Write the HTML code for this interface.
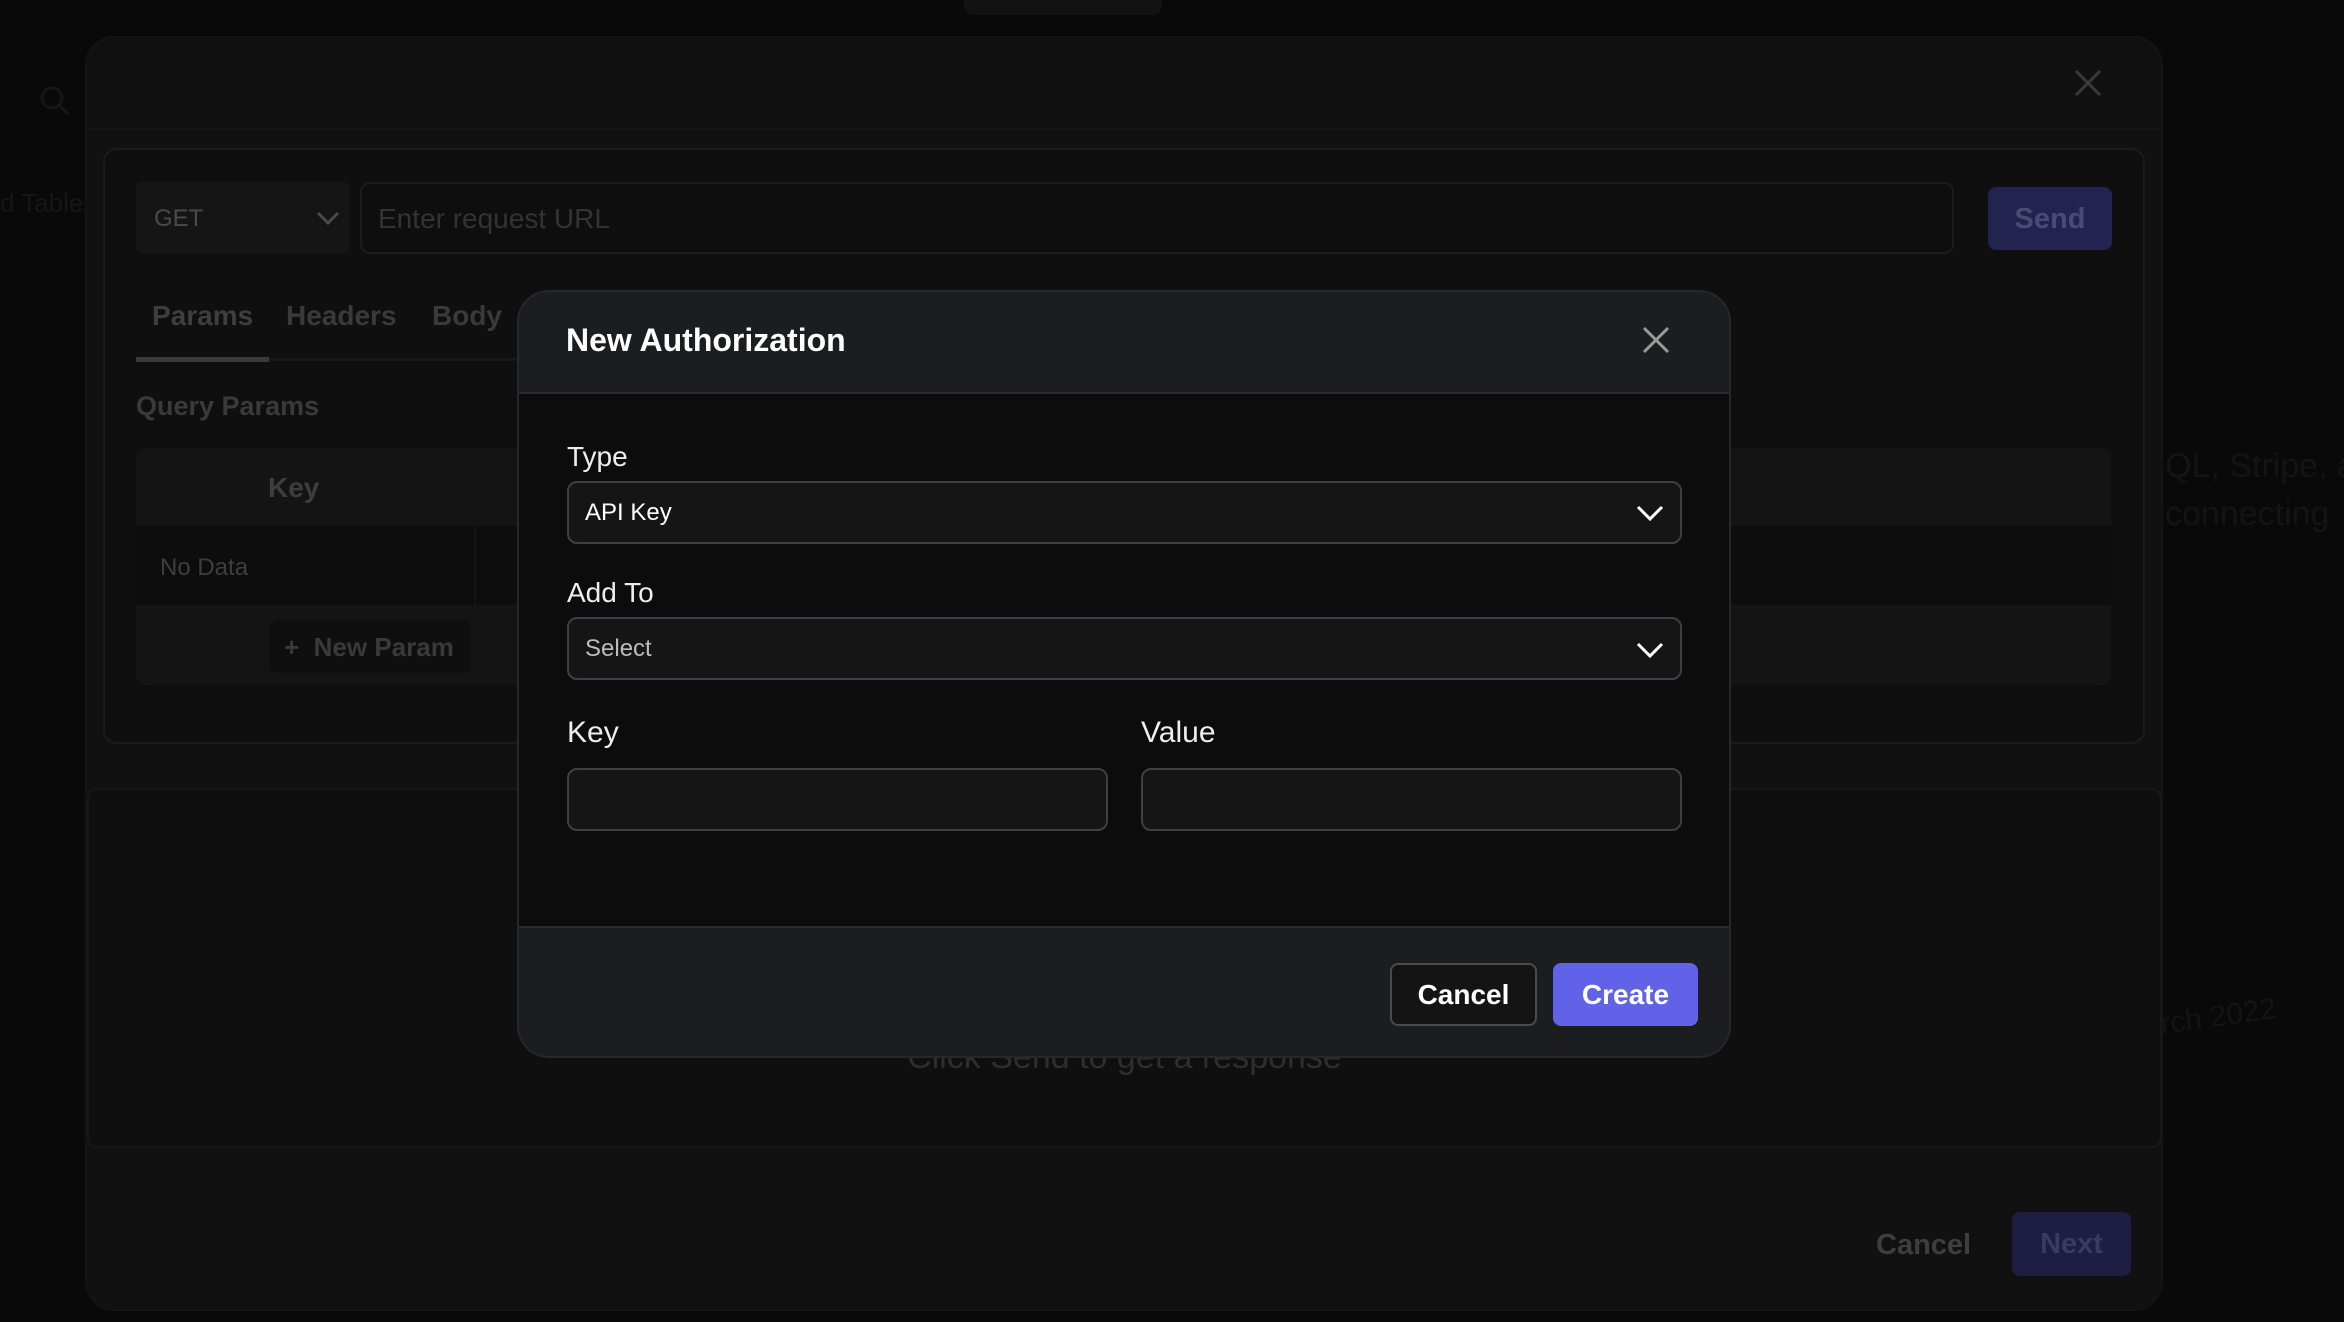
<!DOCTYPE html>
<html><head><meta charset="utf-8"><style>
*{box-sizing:border-box;margin:0;padding:0}
body{width:2344px;height:1322px;background:#090909;font-family:"Liberation Sans",sans-serif;position:relative;overflow:hidden;color:#fff}
.a{position:absolute}
</style></head><body>
<div class="a" style="left:964px;top:0;width:198px;height:15px;background:#121212;border-radius:0 0 10px 10px"></div>
<svg class="a" style="left:38px;top:84px" width="34" height="34" viewBox="0 0 34 34"><circle cx="14" cy="14" r="10" stroke="#161616" stroke-width="3" fill="none"/><path d="M21 21l9 9" stroke="#161616" stroke-width="3"/></svg>
<div class="a" style="left:0;top:188px;font-size:26px;color:#161616;white-space:nowrap">d Tables</div>
<div class="a" style="left:2165px;top:442px;font-size:34px;color:#141414;line-height:48px;white-space:nowrap">QL, Stripe, a<br>connecting</div>
<div class="a" style="left:2160px;top:1000px;font-size:30px;color:#141414;transform:rotate(-8deg);white-space:nowrap">rch 2022</div>

<div class="a" style="left:85px;top:36px;width:2078px;height:1275px;background:#111111;border-radius:30px;border:1px solid #161616"></div>
<div class="a" style="left:86px;top:128px;width:2076px;height:1px;background:#171717"></div>
<svg class="a" style="left:2073px;top:68px" width="30" height="30" viewBox="0 0 30 30"><path d="M3 3L27 27M27 3L3 27" stroke="#3a3a3a" stroke-width="3"/></svg>

<div class="a" style="left:103px;top:148px;width:2042px;height:596px;border:2px solid #1b1b1b;border-radius:14px;background:#0f0f0f"></div>
<div class="a" style="left:136px;top:182px;width:214px;height:72px;background:#151515;border-radius:8px"></div>
<div class="a" style="left:154px;top:205px;font-size:24px;color:#4a4a4a">GET</div>
<svg class="a" style="left:316px;top:210px" width="24" height="16" viewBox="0 0 24 16"><path d="M2 3l10 10 10-10" stroke="#4a4a4a" stroke-width="3" fill="none"/></svg>
<div class="a" style="left:360px;top:182px;width:1594px;height:72px;border:2px solid #1c1c1c;border-radius:10px;background:#0e0e0e"></div>
<div class="a" style="left:378px;top:203px;font-size:28px;color:#333">Enter request URL</div>
<div class="a" style="left:1988px;top:187px;width:124px;height:63px;background:#232350;border-radius:8px;color:#4a4a72;font-size:29px;font-weight:bold;text-align:center;line-height:65px">Send</div>
<div class="a" style="left:152px;top:300px;font-size:28px;font-weight:bold;color:#3e3e3e">Params</div>
<div class="a" style="left:286px;top:300px;font-size:28px;font-weight:bold;color:#3a3a3a">Headers</div>
<div class="a" style="left:432px;top:300px;font-size:28px;font-weight:bold;color:#3a3a3a">Body</div>
<div class="a" style="left:136px;top:358px;width:520px;height:3px;background:#181818"></div>
<div class="a" style="left:136px;top:357px;width:133px;height:5px;background:#3a3a3a"></div>
<div class="a" style="left:136px;top:391px;font-size:27px;font-weight:bold;color:#3a3a3a">Query Params</div>
<div class="a" style="left:136px;top:448px;width:1975px;height:237px;background:#141414;border-radius:10px"></div>
<div class="a" style="left:136px;top:526px;width:1975px;height:79px;background:#0d0d0d"></div>
<div class="a" style="left:474px;top:526px;width:2px;height:79px;background:#141414"></div>
<div class="a" style="left:268px;top:472px;font-size:28px;font-weight:bold;color:#3e3e3e">Key</div>
<div class="a" style="left:160px;top:554px;font-size:24px;color:#3e3e3e">No Data</div>
<div class="a" style="left:269px;top:620px;width:202px;height:53px;background:#0f0f0f;border-radius:8px"></div>
<div class="a" style="left:284px;top:632px;font-size:26px;font-weight:bold;color:#3a3a3a">+&nbsp; New Param</div>

<div class="a" style="left:87px;top:788px;width:2075px;height:360px;border:2px solid #181818;border-radius:10px;background:#0f0f0f"></div>
<div class="a" style="left:87px;top:1038px;width:2075px;text-align:center;font-size:34px;color:#2e2e2e">Click Send to get a response</div>
<div class="a" style="left:1876px;top:1229px;font-size:29px;font-weight:bold;color:#3e3e3e">Cancel</div>
<div class="a" style="left:2012px;top:1212px;width:119px;height:64px;background:#1e1e42;border-radius:8px;color:#3a3a62;font-size:29px;font-weight:bold;text-align:center;line-height:64px">Next</div>

<div class="a" style="left:517px;top:290px;width:1214px;height:768px;background:#1c1d20;border:2px solid #26272a;border-radius:32px;overflow:hidden">
  <div class="a" style="left:0;top:100px;width:1214px;height:536px;background:#0c0c0c;border-top:2px solid #2a2b2e;border-bottom:2px solid #2a2b2e"></div>
</div>
<div class="a" style="left:566px;top:322px;font-size:32px;font-weight:bold;color:#fff">New Authorization</div>
<svg class="a" style="left:1641px;top:325px" width="30" height="30" viewBox="0 0 30 30"><path d="M3 3L27 27M27 3L3 27" stroke="#999" stroke-width="3"/></svg>

<div class="a" style="left:567px;top:441px;font-size:28px;color:#eee">Type</div>
<div class="a" style="left:567px;top:481px;width:1115px;height:63px;border:2px solid #3e3f42;border-radius:10px;background:#151516"></div>
<div class="a" style="left:585px;top:499px;font-size:24px;color:#fff">API Key</div>
<svg class="a" style="left:1636px;top:504px" width="28" height="18" viewBox="0 0 28 18"><path d="M2 3l12 12 12-12" stroke="#fff" stroke-width="3" fill="none"/></svg>

<div class="a" style="left:567px;top:577px;font-size:28px;color:#eee">Add To</div>
<div class="a" style="left:567px;top:617px;width:1115px;height:63px;border:2px solid #3e3f42;border-radius:10px;background:#151516"></div>
<div class="a" style="left:585px;top:635px;font-size:24px;color:#bbb">Select</div>
<svg class="a" style="left:1636px;top:641px" width="28" height="18" viewBox="0 0 28 18"><path d="M2 3l12 12 12-12" stroke="#fff" stroke-width="3" fill="none"/></svg>

<div class="a" style="left:567px;top:716px;font-size:30px;color:#eee">Key</div>
<div class="a" style="left:1141px;top:716px;font-size:30px;color:#eee">Value</div>
<div class="a" style="left:567px;top:768px;width:541px;height:63px;border:2px solid #3e3f42;border-radius:10px;background:#151516"></div>
<div class="a" style="left:1141px;top:768px;width:541px;height:63px;border:2px solid #3e3f42;border-radius:10px;background:#151516"></div>

<div class="a" style="left:1390px;top:963px;width:147px;height:63px;border:2px solid #4a4b4e;border-radius:8px;background:#141414;color:#fff;font-size:28px;font-weight:bold;text-align:center;line-height:59px">Cancel</div>
<div class="a" style="left:1553px;top:963px;width:145px;height:63px;border-radius:8px;background:#6063e8;color:#fff;font-size:28px;font-weight:bold;text-align:center;line-height:63px">Create</div>
</body></html>
